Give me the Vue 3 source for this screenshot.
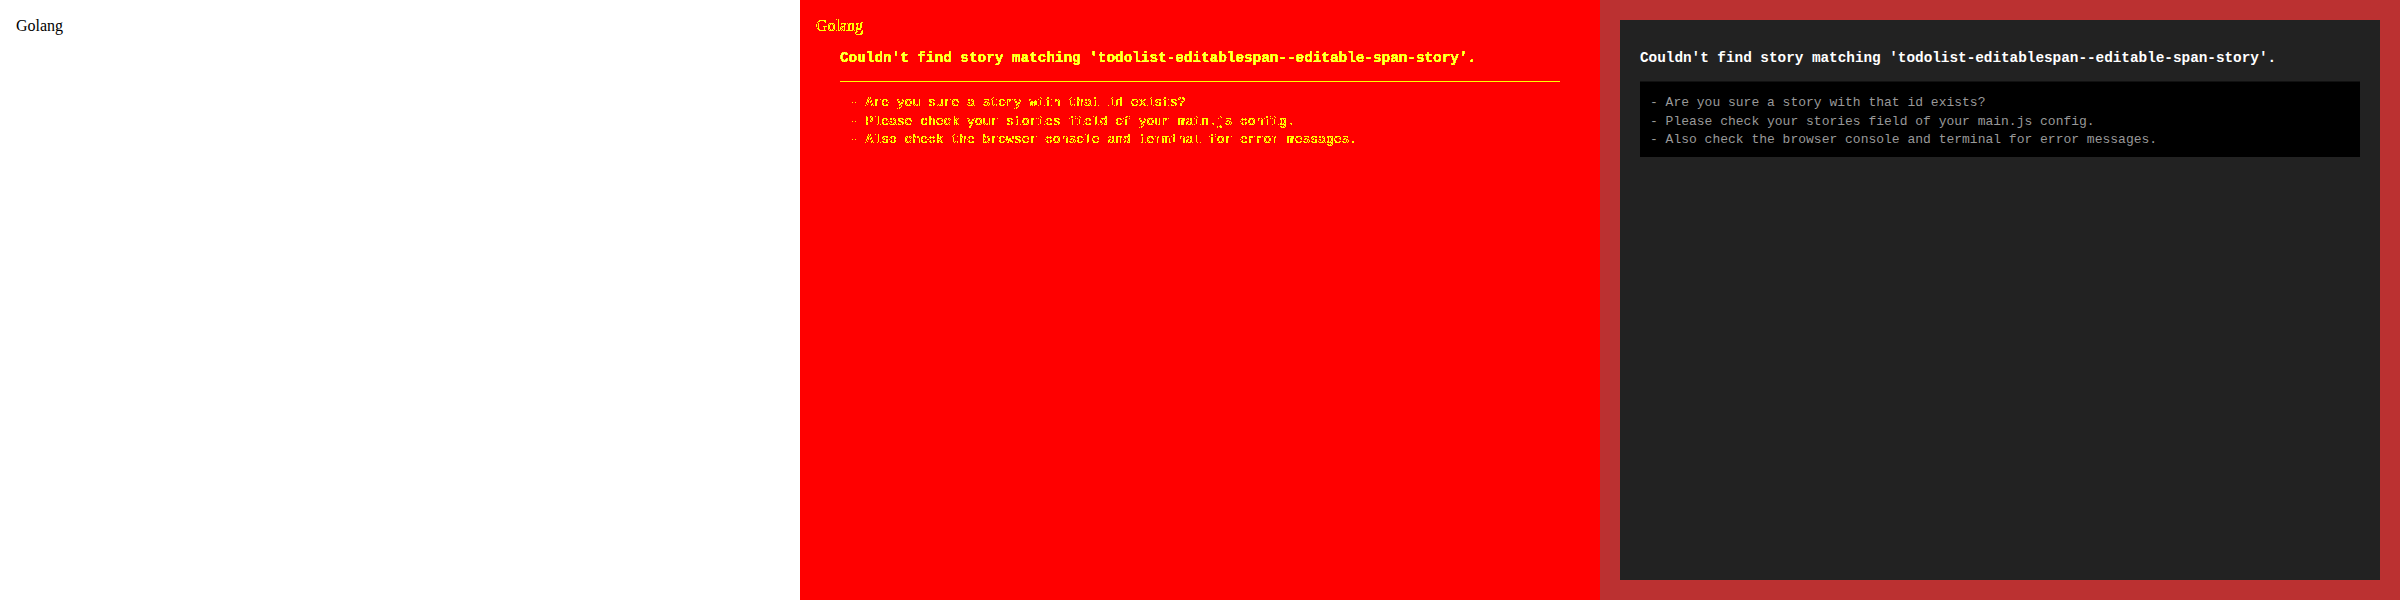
<script setup>
const heading = "Couldn't find story matching 'todolist-editablespan--editable-span-story'."
const hints = [
  '- Are you sure a story with that id exists?',
  '- Please check your stories field of your main.js config.',
  '- Also check the browser console and terminal for error messages.',
]
</script>

<template>
  <main class="comparison">
    <section class="panel baseline">
      <div class="label">Golang</div>
    </section>

    <section class="panel diff">
      <div class="label edges">Golang</div>
      <div class="message">
        <h1 class="heading solid-edges">{{ heading }}</h1>
        <div class="hints">
          <div v-for="hint in hints" :key="hint" class="hint edges">{{ hint }}</div>
        </div>
      </div>
    </section>

    <section class="panel error">
      <div class="message">
        <h1 class="heading">{{ heading }}</h1>
        <div class="hints">
          <div v-for="hint in hints" :key="hint" class="hint">{{ hint }}</div>
        </div>
      </div>
    </section>

    <!-- Partially covered glyph pixels become yellow; fully covered ones drop out or stay white. -->
    <svg class="filters" width="0" height="0" aria-hidden="true">
      <filter id="edges" color-interpolation-filters="sRGB">
        <feComponentTransfer in="SourceAlpha" result="edge">
          <feFuncA type="discrete" tableValues="0 1 1 1 1 1 1 1 1 0" />
        </feComponentTransfer>
        <feFlood flood-color="#ff0" />
        <feComposite operator="in" in2="edge" />
      </filter>
      <filter id="solid-edges" color-interpolation-filters="sRGB">
        <feComponentTransfer in="SourceAlpha" result="shape">
          <feFuncA type="discrete" tableValues="0 0 1 1 1 1 1 1 1 1" />
        </feComponentTransfer>
        <feComponentTransfer in="SourceGraphic" result="core">
          <feFuncA type="discrete" tableValues="0 0 0 0 0 0 0 0 0 0 0 0 0 0 0 0 0 0 0 0 0 0 0 0 0 0 0 0 0 0.35" />
        </feComponentTransfer>
        <feFlood flood-color="#ff0" />
        <feComposite operator="in" in2="shape" result="yellow" />
        <feMerge>
          <feMergeNode in="yellow" />
          <feMergeNode in="core" />
        </feMerge>
      </filter>
    </svg>
  </main>
</template>

<style>
body {
  margin: 0;
  overflow: hidden;
}
</style>

<style scoped>
.comparison {
  display: grid;
  grid-template-columns: repeat(3, 800px);
  width: 2400px;
  height: 600px;
  position: relative;
}
.panel {
  box-sizing: border-box;
  height: 600px;
  padding: 20px;
}
.baseline {
  background: #fff;
}
.label {
  width: 100px;
  height: 18px;
  margin: -3px 0 0 -4px;
  font: 16px/18px "Liberation Serif", "Times New Roman", serif;
  color: #000;
}
.diff {
  background: #f00;
}
.diff .message {
  margin-top: -15px;
}
.message {
  box-sizing: border-box;
  height: 560px;
  padding: 20px;
  font-family: "Courier New", "Liberation Mono", monospace;
  color: #fff;
}
.heading {
  margin: 10px 0 14px;
  font-size: 14.4px;
  line-height: 17px;
  font-weight: 700;
  letter-spacing: -0.04px;
  white-space: nowrap;
}
.hints {
  box-sizing: border-box;
  height: 76px;
  padding: 12px 10px 8px;
  border-top: 1px solid #111;
  background: #000;
}
.hint {
  height: 18.5px;
  font-size: 13px;
  line-height: 18.5px;
  color: #999;
  white-space: pre;
}
.diff .hints {
  border-top-color: #ff0;
  background: none;
}
.error {
  background: #bb3131;
}
.error .message {
  background: #222;
}
.edges {
  filter: url(#edges);
}
.solid-edges {
  filter: url(#solid-edges);
}
.filters {
  position: absolute;
}
</style>
